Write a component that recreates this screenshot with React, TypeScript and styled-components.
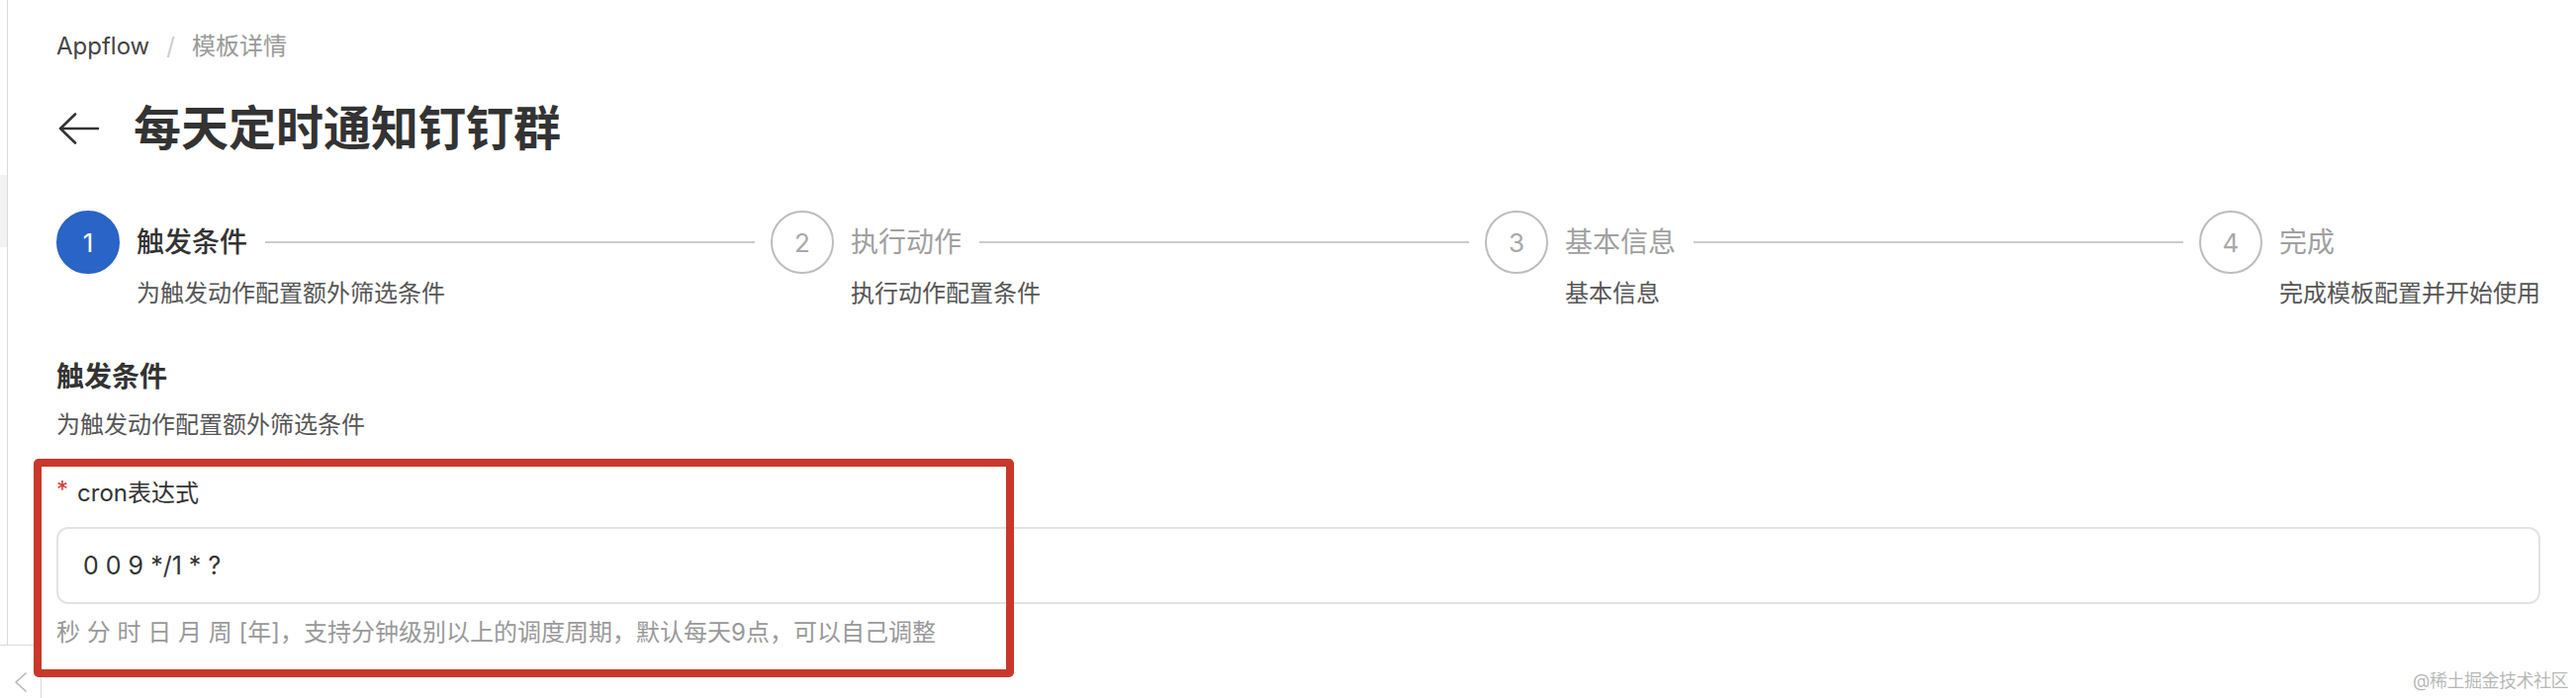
import React from 'react';
import styled, { createGlobalStyle } from 'styled-components';

const GlobalStyle = createGlobalStyle`
  html, body {
    margin: 0;
    padding: 0;
    background: #ffffff;
  }
  body {
    font-family: Inter, "Noto Sans CJK SC", sans-serif;
    color: #333333;
  }
`;

interface StepItem {
  title: string;
  description: string;
}

const STEPS: StepItem[] = [
  { title: '触发条件', description: '为触发动作配置额外筛选条件' },
  { title: '执行动作', description: '执行动作配置条件' },
  { title: '基本信息', description: '基本信息' },
  { title: '完成', description: '完成模板配置并开始使用' }
];

const CURRENT_STEP = 0;

const App: React.FunctionComponent = () => {
  return (
    <>
      <GlobalStyle />
      <StyledLayout>
        <LeftRail>
          <RailHighlight />
        </LeftRail>

        <Main>
          <Breadcrumb>
            <span className="breadcrumb_root">Appflow</span>
            <span className="breadcrumb_separator">/</span>
            <span className="breadcrumb_current">模板详情</span>
          </Breadcrumb>

          <PageHeader>
            <BackButton aria-label="返回">
              <svg width="44" height="32" viewBox="0 0 44 32" fill="none">
                <path
                  d="M4 16 H42 M19 1.5 L4 16 L19 30.5"
                  stroke="#333333"
                  strokeWidth="2.6"
                  strokeLinecap="round"
                  strokeLinejoin="round"
                />
              </svg>
            </BackButton>
            <PageTitle>每天定时通知钉钉群</PageTitle>
          </PageHeader>

          <Steps>
            {STEPS.map((step, index) => {
              const isLast = index === STEPS.length - 1;
              const isActive = index === CURRENT_STEP;
              return (
                <Step key={step.title} $last={isLast}>
                  <StepIcon $active={isActive}>{index + 1}</StepIcon>
                  <StepContent>
                    <StepTitleRow>
                      <StepTitle $active={isActive}>{step.title}</StepTitle>
                      {!isLast && <StepTail />}
                    </StepTitleRow>
                    <StepDescription>{step.description}</StepDescription>
                  </StepContent>
                </Step>
              );
            })}
          </Steps>

          <SectionTitle>触发条件</SectionTitle>
          <SectionSubtitle>为触发动作配置额外筛选条件</SectionSubtitle>

          <FormItem>
            <FormLabel>
              <span className="label_required">*</span>
              cron表达式
            </FormLabel>
            <CronInput readOnly value="0 0 9 */1 * ?" />
            <FormHelp>
              秒 分 时 日 月 周 [年]，支持分钟级别以上的调度周期，默认每天9点，可以自己调整
            </FormHelp>
            <Annotation />
          </FormItem>
        </Main>

        <CollapseTab>
          <svg width="16" height="22" viewBox="0 0 16 22" fill="none">
            <path
              d="M13 2 L3 11 L13 20"
              stroke="#b5b5b5"
              strokeWidth="1.6"
              strokeLinecap="round"
              strokeLinejoin="round"
            />
          </svg>
        </CollapseTab>

        <Watermark>@稀土掘金技术社区</Watermark>
      </StyledLayout>
    </>
  );
};

export default App;

const StyledLayout = styled.div`
  position: relative;
  display: flex;
  width: 2604px;
  height: 706px;
  overflow: hidden;
  background: #ffffff;
`;

const LeftRail = styled.div`
  flex: none;
  width: 8px;
  height: 652px;
  padding-top: 177px;
  box-sizing: border-box;
  border-right: 1px solid #dadada;
`;

const RailHighlight = styled.div`
  height: 73px;
  background: #f2f2f2;
`;

const Main = styled.main`
  flex: 1;
  min-width: 0;
  padding: 31px 36px 0 49px;
`;

const Breadcrumb = styled.div`
  display: flex;
  align-items: center;
  height: 32px;
  font-size: 24px;
  line-height: 32px;

  .breadcrumb_root {
    color: #444444;
  }

  .breadcrumb_separator {
    margin: 0 17px;
    color: #cccccc;
  }

  .breadcrumb_current {
    color: #999999;
  }
`;

const PageHeader = styled.div`
  display: flex;
  align-items: center;
  height: 64px;
  margin-top: 35px;
`;

const BackButton = styled.div`
  display: flex;
  align-items: center;
  margin-right: 34px;
  cursor: pointer;
`;

const PageTitle = styled.h1`
  margin: 0;
  font-size: 48px;
  line-height: 64px;
  font-weight: 600;
  color: #333333;
`;

const Steps = styled.div`
  display: flex;
  margin-top: 51px;
`;

const Step = styled.div<{ $last: boolean }>`
  display: flex;
  flex: ${({ $last }) => ($last ? 'none' : '1')};
  gap: 17px;
  min-width: 0;
`;

const StepIcon = styled.div<{ $active: boolean }>`
  flex: none;
  box-sizing: border-box;
  width: 64px;
  height: 64px;
  border-radius: 50%;
  display: flex;
  align-items: center;
  justify-content: center;
  font-size: 26px;
  border: 2px solid ${({ $active }) => ($active ? '#2964c6' : '#bdbdbd')};
  background: ${({ $active }) => ($active ? '#2964c6' : '#ffffff')};
  color: ${({ $active }) => ($active ? '#ffffff' : '#a8a8a8')};
`;

const StepContent = styled.div`
  flex: 1;
  display: flex;
  flex-direction: column;
  min-width: 0;
`;

const StepTitleRow = styled.div`
  display: flex;
  align-items: center;
  height: 64px;
`;

const StepTitle = styled.div<{ $active: boolean }>`
  flex: none;
  font-size: 28px;
  line-height: 64px;
  font-weight: ${({ $active }) => ($active ? 500 : 400)};
  color: ${({ $active }) => ($active ? '#333333' : '#a0a0a0')};
`;

const StepTail = styled.div`
  flex: 1;
  height: 2px;
  margin: 0 16px 0 18px;
  background: #cccccc;
`;

const StepDescription = styled.div`
  margin-top: 4px;
  font-size: 24px;
  line-height: 32px;
  color: #555555;
  white-space: nowrap;
`;

const SectionTitle = styled.h2`
  margin: 48px 0 0 0;
  font-size: 28px;
  line-height: 40px;
  font-weight: 600;
  color: #333333;
`;

const SectionSubtitle = styled.p`
  margin: 13px 0 0 0;
  font-size: 24px;
  line-height: 32px;
  color: #555555;
`;

const FormItem = styled.div`
  position: relative;
  margin-top: 37px;
`;

const FormLabel = styled.label`
  display: flex;
  align-items: center;
  font-size: 24px;
  line-height: 32px;
  color: #333333;

  .label_required {
    margin-right: 9px;
    color: #d23b2e;
    font-size: 24px;
    position: relative;
    top: -3px;
  }
`;

const CronInput = styled.input`
  display: block;
  box-sizing: border-box;
  width: 100%;
  height: 78px;
  margin-top: 18px;
  padding: 0 25px;
  border: 2px solid #e3e3e3;
  border-radius: 12px;
  background: #ffffff;
  font-family: Inter, "Noto Sans CJK SC", sans-serif;
  font-size: 25px;
  color: #333333;
  outline: none;
`;

const FormHelp = styled.div`
  margin-top: 13px;
  font-size: 24px;
  line-height: 32px;
  color: #999999;
`;

const Annotation = styled.div`
  position: absolute;
  top: -19px;
  left: -23px;
  width: 991px;
  height: 221px;
  box-sizing: border-box;
  border: 8px solid #c9372a;
  border-radius: 5px;
  pointer-events: none;
  z-index: 2;
`;

const CollapseTab = styled.div`
  position: absolute;
  left: 0;
  top: 652px;
  width: 42px;
  height: 60px;
  box-sizing: border-box;
  border: 1px solid #dadada;
  border-left: none;
  background: #ffffff;
  display: flex;
  align-items: flex-start;
  justify-content: center;
  padding-top: 26px;
  z-index: 1;
`;

const Watermark = styled.div`
  position: absolute;
  right: 8px;
  bottom: 7px;
  font-size: 18px;
  line-height: 20px;
  color: rgba(160, 160, 160, 0.75);
  letter-spacing: -0.5px;
`;
